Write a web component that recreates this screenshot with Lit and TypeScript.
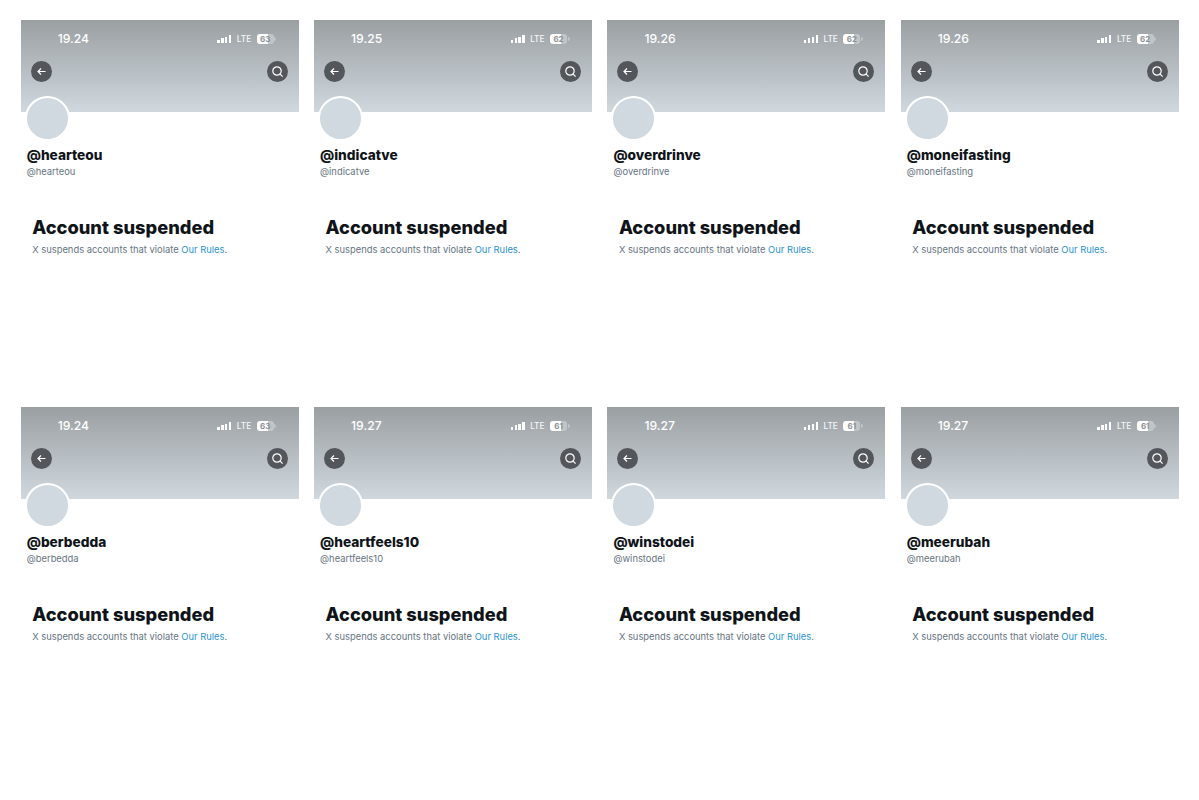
import { LitElement, html, css } from "lit";
import { customElement } from "lit/decorators.js";

const cards = [
  ["19.24", "63", "hearteou"],
  ["19.25", "62", "indicatve"],
  ["19.26", "62", "overdrinve"],
  ["19.26", "62", "moneifasting"],
  ["19.24", "63", "berbedda"],
  ["19.27", "61", "heartfeels10"],
  ["19.27", "61", "winstodei"],
  ["19.27", "61", "meerubah"],
];

@customElement("app-root")
export class AppRoot extends LitElement {
  static styles = css`
    :host { display: block; width: 1199px; height: 800px; background: #fff; overflow: hidden; font-family: Inter, "Liberation Sans", sans-serif; }
    .grid { display: grid; grid-template-columns: repeat(4, 278px); column-gap: 15.35px; grid-auto-rows: 387px; padding: 20px 0 0 20.7px; }
    .banner { height: 92px; background: linear-gradient(#9a9fa2, #d0d8de); position: relative; box-sizing: border-box; padding: 11px 11px 0 10px; }
    .status { display: flex; align-items: center; height: 15px; color: #fff; }
    .time { margin-left: 27px; font-size: 12.2px; font-weight: 500; flex: 1; }
    .sig { display: flex; align-items: flex-end; gap: 1.5px; height: 8px; margin-right: 5.5px; }
    .sig i { width: 2.4px; background: #fff; display: block; }
    .lte { font-size: 8.3px; font-weight: 500; margin-right: 5.5px; opacity: .9; }
    .bat { width: 17px; height: 10px; border-radius: 3px; background: linear-gradient(90deg, #fff 63%, #c0c5c8 63%); color: #8d9295; font-size: 8px; font-weight: 700; line-height: 10px; text-align: center; margin-right: 14px; position: relative; }
    .bat::after { content: ""; position: absolute; right: -2.5px; top: 3px; width: 2px; height: 4px; background: #c0c5c8; border-radius: 0 2px 2px 0; }
    .nav { display: flex; justify-content: space-between; margin-top: 15px; }
    .btn { width: 21px; height: 21px; border-radius: 50%; background: #53565a; display: flex; align-items: center; justify-content: center; }
    .btn svg { display: block; }
    .avatar { width: 41px; height: 41px; border-radius: 50%; background: #cfd9df; border: 2px solid #fff; margin: -16px 0 0 4px; position: relative; }
    .name { margin: 5px 0 0 6px; font-size: 13.7px; line-height: 18px; font-weight: 800; color: #0f1419; }
    .handle { margin: 1px 0 0 6px; font-size: 9.4px; line-height: 13px; color: #66747f; }
    .title { margin: 37px 0 0 11.5px; font-size: 18.3px; line-height: 24px; font-weight: 800; color: #0f1419; }
    .desc { margin: 4px 0 0 11.5px; font-size: 9.4px; line-height: 14px; color: #66747f; }
    .desc a { color: #2a93d0; text-decoration: none; }
  `;

  render() {
    return html`<div class="grid">
      ${cards.map(([t, b, n]) => html`<section>
        <div class="banner">
          <div class="status">
            <span class="time">${t}</span>
            <span class="sig"><i style="height:3px"></i><i style="height:4.5px"></i><i style="height:6px"></i><i style="height:8px"></i></span>
            <span class="lte">LTE</span>
            <span class="bat">${b}</span>
          </div>
          <div class="nav">
            <span class="btn"><svg width="11" height="11" viewBox="0 0 11 11" fill="none" stroke="#fff" stroke-width="1.2"><path d="M9.5 5.5H2M5 2.5l-3 3 3 3"/></svg></span>
            <span class="btn"><svg width="13" height="13" viewBox="0 0 13 13" fill="none" stroke="#fff" stroke-width="1.2"><circle cx="6" cy="6" r="4.2"/><path d="M9.2 9.2l2.4 2.4"/></svg></span>
          </div>
        </div>
        <div class="avatar"></div>
        <div class="name">@${n}</div>
        <div class="handle">@${n}</div>
        <div class="title">Account suspended</div>
        <div class="desc">X suspends accounts that violate <a>Our Rules</a>.</div>
      </section>`)}
    </div>`;
  }
}
